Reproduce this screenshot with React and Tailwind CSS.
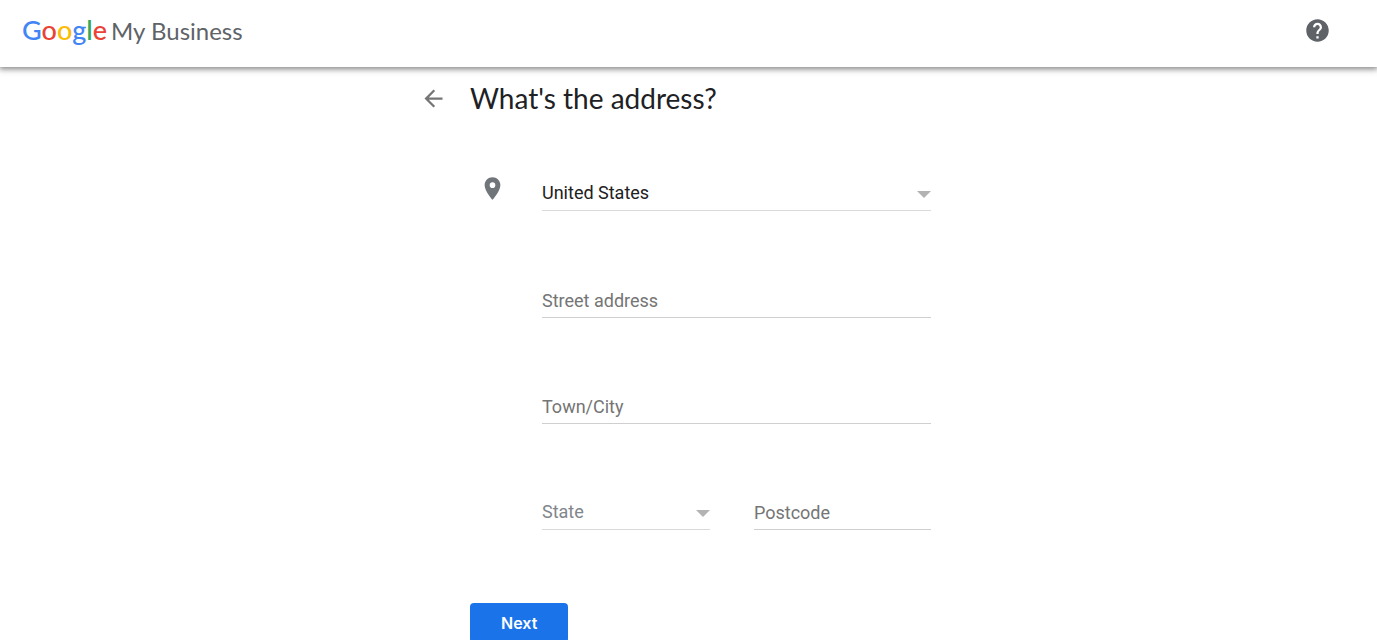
import React, { useState } from 'react';
import { MdArrowBack, MdHelp, MdPlace } from 'react-icons/md';

const COUNTRIES = ['United States', 'Canada', 'United Kingdom', 'Australia'];
const STATES = ['California', 'Florida', 'New York', 'Texas', 'Washington'];

const Caret = () => (
    <svg viewBox="0 0 14 7" className="pointer-events-none absolute right-0 top-4 h-[7px] w-[14px] fill-[#b3b3b3]" aria-hidden="true">
        <path d="M0 0h14L7 7z" />
    </svg>
);

const SelectField = ({ label, value, onChange, options, placeholder }) => (
    <div className="relative">
        <select
            aria-label={label}
            value={value}
            onChange={(e) => onChange(e.target.value)}
            className={`block h-9 w-full appearance-none border-b border-[#dadada] bg-transparent pr-6 text-lg leading-6 outline-none focus:border-[#1a73e8] ${value ? 'text-[#212121]' : 'text-[#80868b]'}`}
        >
            {placeholder && <option value="" disabled>{placeholder}</option>}
            {options.map((option) => (
                <option key={option} value={option}>{option}</option>
            ))}
        </select>
        <Caret />
    </div>
);

const TextField = ({ label, value, onChange }) => (
    <input
        type="text"
        aria-label={label}
        placeholder={label}
        value={value}
        onChange={(e) => onChange(e.target.value)}
        className="block h-9 w-full border-b border-[#cfcfcf] bg-transparent pt-px text-lg leading-6 text-[#212121] outline-none placeholder:text-[#757575] focus:border-[#1a73e8]"
    />
);

const Header = () => (
    <header className="relative flex h-[67px] items-center justify-between bg-white pb-1.5 pl-[22px] pr-[46px] shadow-[0_1px_6px_1px_rgba(0,0,0,0.5)]">
        <a href="#home" className="flex items-baseline gap-1 font-['Lato',sans-serif]">
            <span className="text-[27px] font-medium leading-8">
                <span className="text-[#4285f4]">G</span>
                <span className="text-[#ea4335]">o</span>
                <span className="text-[#fbbc04]">o</span>
                <span className="text-[#4285f4]">g</span>
                <span className="text-[#34a853]">l</span>
                <span className="text-[#ea4335]">e</span>
            </span>
            <span className="text-2xl leading-8 text-[#5f6368]">My Business</span>
        </a>
        <button type="button" aria-label="Help" className="text-[#5f6368]">
            <MdHelp size={27} />
        </button>
    </header>
);

const App = () => {
    const [country, setCountry] = useState('United States');
    const [street, setStreet] = useState('');
    const [city, setCity] = useState('');
    const [state, setState] = useState('');
    const [postcode, setPostcode] = useState('');

    return (
        <div className="bg-white font-['Roboto',sans-serif]">
            <Header />

            <main className="mx-auto w-full max-w-[537px] pt-[11px]">
                {/* Title */}
                <div className="flex items-center gap-[23px]">
                    <button type="button" aria-label="Back" className="text-[#757575]">
                        <MdArrowBack size={27} />
                    </button>
                    <h1 className="font-['Lato',sans-serif] text-[28px] leading-10 text-[#202124]">What's the address?</h1>
                </div>

                <form onSubmit={(e) => e.preventDefault()} className="pl-[50px] pr-[26px] pt-[57px]">
                    {/* Address fields */}
                    <div className="flex items-start gap-9">
                        <MdPlace size={27} className="ml-[9px] shrink-0 text-[#70757a]" />
                        <div className="min-w-0 flex-1">
                            <SelectField label="Country" value={country} onChange={setCountry} options={COUNTRIES} />
                            <div className="mt-[71px] flex flex-col gap-[70px]">
                                <TextField label="Street address" value={street} onChange={setStreet} />
                                <TextField label="Town/City" value={city} onChange={setCity} />
                                <div className="flex gap-11">
                                    <div className="w-[168px]">
                                        <SelectField label="State" value={state} onChange={setState} options={STATES} placeholder="State" />
                                    </div>
                                    <div className="min-w-0 flex-1">
                                        <TextField label="Postcode" value={postcode} onChange={setPostcode} />
                                    </div>
                                </div>
                            </div>
                        </div>
                    </div>

                    <button type="submit" className="mt-[73px] h-10 rounded bg-[#1a73e8] px-[31px] font-['Inter',sans-serif] text-base font-semibold text-white hover:bg-[#1765cc]">
                        Next
                    </button>
                </form>
            </main>
        </div>
    );
};

export default App;
